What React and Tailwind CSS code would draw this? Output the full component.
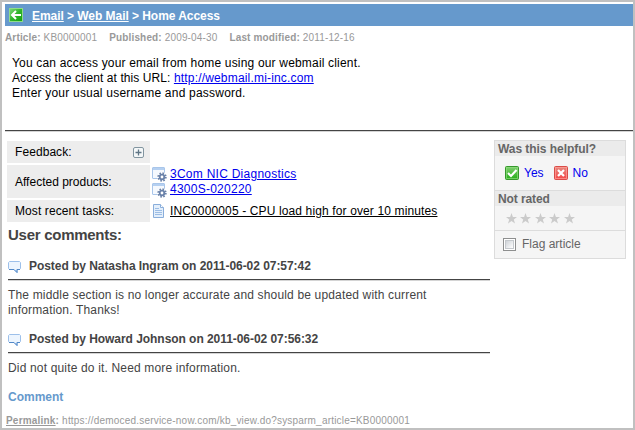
import React from "react";

function BackIcon() {
  return (
    <svg width="14" height="14" viewBox="0 0 14 14" className="block shrink-0">
      <defs>
        <linearGradient id="back" x1="0" y1="0" x2="1" y2="1">
          <stop offset="0" stopColor="#7fd67a" />
          <stop offset="0.5" stopColor="#2fb52b" />
          <stop offset="1" stopColor="#12a010" />
        </linearGradient>
      </defs>
      <rect x="0.5" y="0.5" width="13" height="13" fill="url(#back)" stroke="#8fdc8a" />
      <path d="M12 7H3.5M7 3L3 7l4 4" fill="none" stroke="#fff" strokeWidth="2" />
    </svg>
  );
}

function PlusIcon() {
  return (
    <svg width="11" height="11" viewBox="0 0 11 11" className="block shrink-0">
      <rect x="0.5" y="0.5" width="10" height="10" rx="1.5" fill="#f4f7f8" stroke="#8295a0" />
      <path d="M2.5 5.5h6M5.5 2.5v6" stroke="#5f7585" strokeWidth="1.3" />
    </svg>
  );
}

function ProductIcon() {
  return (
    <svg width="15" height="15" viewBox="0 0 15 15" className="block shrink-0">
      <rect x="0.5" y="0.5" width="12" height="11" rx="0.5" fill="#f5f9fe" stroke="#a9c6ea" />
      <path d="M1 1h11v2H1z" fill="#b5d0f1" />
      <circle cx="10" cy="10" r="5" fill="#fff" />
      <circle cx="10" cy="10" r="3.9" fill="none" stroke="#6880a8" strokeWidth="1.6" strokeDasharray="1.6 1.463" />
      <circle cx="10" cy="10" r="2.3" fill="#fff" stroke="#6880a8" strokeWidth="1.8" />
    </svg>
  );
}

function TaskIcon() {
  return (
    <svg width="11" height="14" viewBox="0 0 11 14" className="block shrink-0">
      <path d="M.5.5h7l3 3v10H.5z" fill="#e4effb" stroke="#8aaedb" />
      <path d="M7.5.5v3h3" fill="#fff" stroke="#8aaedb" />
      <path d="M2 4.5h4M2 6.5h7M2 8.5h7M2 10.5h7" stroke="#9cbde5" />
    </svg>
  );
}

function BubbleIcon() {
  return (
    <svg width="13" height="12" viewBox="0 0 13 12" className="block shrink-0">
      <path d="M1.5.5h10l1 1v6l-1 1H9v3l-3-3H1.5l-1-1v-6z" fill="#edf5fe" stroke="#9dc0ea" />
      <path d="M1 8.5h5l3 3v-3h3" fill="none" stroke="#5289c8" />
    </svg>
  );
}

function YesIcon() {
  return (
    <svg width="14" height="14" viewBox="0 0 14 14" className="block shrink-0">
      <defs>
        <linearGradient id="yes" x1="0" y1="0" x2="0" y2="1">
          <stop offset="0" stopColor="#83cf72" />
          <stop offset="1" stopColor="#22ae16" />
        </linearGradient>
      </defs>
      <rect x="0.5" y="0.5" width="13" height="13" rx="1" fill="url(#yes)" stroke="#36982c" />
      <rect x="1.5" y="1.5" width="11" height="11" fill="none" stroke="#8edc7f" strokeOpacity="0.7" />
      <path d="M3 7l3 3 5.5-6" fill="none" stroke="#fff" strokeWidth="2.1" />
    </svg>
  );
}

function NoIcon() {
  return (
    <svg width="14" height="14" viewBox="0 0 14 14" className="block shrink-0">
      <defs>
        <linearGradient id="no" x1="0" y1="0" x2="0" y2="1">
          <stop offset="0" stopColor="#e58a80" />
          <stop offset="1" stopColor="#f64646" />
        </linearGradient>
      </defs>
      <rect x="0.5" y="0.5" width="13" height="13" rx="1" fill="url(#no)" stroke="#d94c48" />
      <rect x="1.5" y="1.5" width="11" height="11" fill="none" stroke="#ffa19a" strokeOpacity="0.7" />
      <path d="M4 4l6 6M10 4l-6 6" fill="none" stroke="#fff" strokeWidth="2.2" />
    </svg>
  );
}

function Star() {
  return (
    <svg width="11" height="11" viewBox="0 0 11 11" className="block shrink-0">
      <path d="M5.5 0l1.4 3.9H11L7.8 6.4 9 10.6 5.5 8.1 2 10.6l1.2-4.2L0 3.9h4.1z" fill="#cbcbcb" />
    </svg>
  );
}

function Comment({ title, children }) {
  return (
    <article>
      <div className="flex h-[25px] items-start border-b border-[#444] shadow-[0_1px_0_#d4d4d4]">
        <div className="pt-[6px]"><BubbleIcon /></div>
        <h3 className="ml-2 pt-[3px] text-[12px] font-bold leading-[16px] tracking-[-0.05px]">{title}</h3>
      </div>
      <p className="pt-2 leading-[15px] tracking-[0.165px]">{children}</p>
    </article>
  );
}

const label = "flex w-[143px] shrink-0 items-center justify-between bg-[#ededed] pl-2 pr-[6px]";

export default function App() {
  return (
    <div className="h-[430px] w-[635px] overflow-hidden whitespace-nowrap border-2 border-[#c0c0c0] bg-white pl-[3px] pt-[2px] font-['Liberation_Sans',Arial,sans-serif] text-[12px] text-black">
      <header className="flex h-[22px] items-center bg-[#6699cc] pl-1 font-bold leading-[22px] text-white">
        <BackIcon />
        <nav className="ml-[9px] whitespace-pre pt-px tracking-[-0.05px]"><a className="underline">Email</a> &gt; <a className="underline">Web Mail</a> &gt; Home Access</nav>
      </header>
      <div className="flex h-[29px] gap-3 pt-[6px] text-[10px] leading-[12px] tracking-[0.15px] text-[#999]">
        <span><b>Article:</b> KB0000001</span>
        <span><b>Published:</b> 2009-04-30</span>
        <span><b>Last modified:</b> 2011-12-16</span>
      </div>
      <div className="h-[76px] border-b border-[#444] pl-[7px] pt-px leading-[15px] shadow-[0_1px_0_#d4d4d4]">
        <p className="tracking-[0.18px]">You can access your email from home using our webmail client.</p>
        <p className="tracking-[0.08px]">Access the client at this URL: <a className="tracking-[0.18px] text-[#0000ee] underline">http://webmail.mi-inc.com</a></p>
        <p className="tracking-[0.21px]">Enter your usual username and password.</p>
      </div>
      <div className="flex items-start justify-between pr-[7px]">
        <main className="w-[485px] text-[#444]">
          <section className="flex flex-col gap-[2px] pl-[2px] pt-[10px] text-black">
            <div className="flex h-[22px]">
              <div className={label}><span className="tracking-[0.07px]">Feedback:</span><PlusIcon /></div>
            </div>
            <div className="flex h-[33px]">
              <div className={label}>Affected products:</div>
              <div className="pl-[2px] pt-[2px] text-[#0000ee]">
                <div className="flex h-4"><ProductIcon /><a className="ml-[3px] leading-[14px] tracking-[0.26px] underline">3Com NIC Diagnostics</a></div>
                <div className="flex h-4"><ProductIcon /><a className="ml-[3px] leading-[13px] tracking-[0.25px] underline">4300S-020220</a></div>
              </div>
            </div>
            <div className="flex h-[22px]">
              <div className={label}><span className="tracking-[0.1px]">Most recent tasks:</span></div>
              <div className="flex items-center pl-[3px]"><TaskIcon /><a className="ml-[6px] tracking-[0.13px] underline">INC0000005 - CPU load high for over 10 minutes</a></div>
            </div>
          </section>
          <h2 className="h-[33px] pl-[3px] pt-1 text-[15px] font-bold leading-[18px] tracking-[-0.27px]">User comments:</h2>
          <div className="flex h-[130px] flex-col gap-[10px] pl-[3px]">
            <Comment title="Posted by Natasha Ingram on 2011-06-02 07:57:42">
              The middle section is no longer accurate and should be updated with current<br />information. Thanks!
            </Comment>
            <Comment title="Posted by Howard Johnson on 2011-06-02 07:56:32">
              Did not quite do it. Need more information.
            </Comment>
          </div>
          <a className="block h-[25px] pl-[3px] pt-[5px] font-bold leading-[15px] text-[#6699cc]">Comment</a>
          <footer className="pl-px pt-[5px] text-[10px] leading-[12px] tracking-[0.2px] text-[#999]"><b className="underline">Permalink</b><b>:</b> https://democed.service-now.com/kb_view.do?sysparm_article=KB0000001</footer>
        </main>
        <aside className="mt-[9px] w-[132px] border border-[#dcdcdc] bg-[#f5f5f5] text-[#666]">
          <h3 className="h-[15px] bg-[#ebebeb] pl-[3px] font-bold leading-[17px] tracking-[-0.05px]">Was this helpful?</h3>
          <div className="flex h-[35px] items-center border-b border-[#dcdcdc] pl-[10px] text-[#0000ee]">
            <YesIcon /><a className="ml-[5px]">Yes</a>
            <div className="ml-[10px]"><NoIcon /></div><a className="ml-[5px]">No</a>
          </div>
          <h3 className="h-[15px] bg-[#ebebeb] pl-[3px] font-bold leading-[17px] tracking-[-0.1px]">Not rated</h3>
          <div className="flex h-[25px] items-center gap-[3.4px] border-b border-[#dcdcdc] pl-[11px] pt-px">
            <Star /><Star /><Star /><Star /><Star />
          </div>
          <div className="flex h-[27px] items-center pl-2">
            <span className="h-[13px] w-[13px] border border-[#8e8f8f] bg-white p-px">
              <span className="block h-full w-full border border-[#c4c8cc] bg-linear-to-br from-[#cfd3d8] to-white" />
            </span>
            <span className="ml-[6px] pb-[2px]">Flag article</span>
          </div>
        </aside>
      </div>
    </div>
  );
}
